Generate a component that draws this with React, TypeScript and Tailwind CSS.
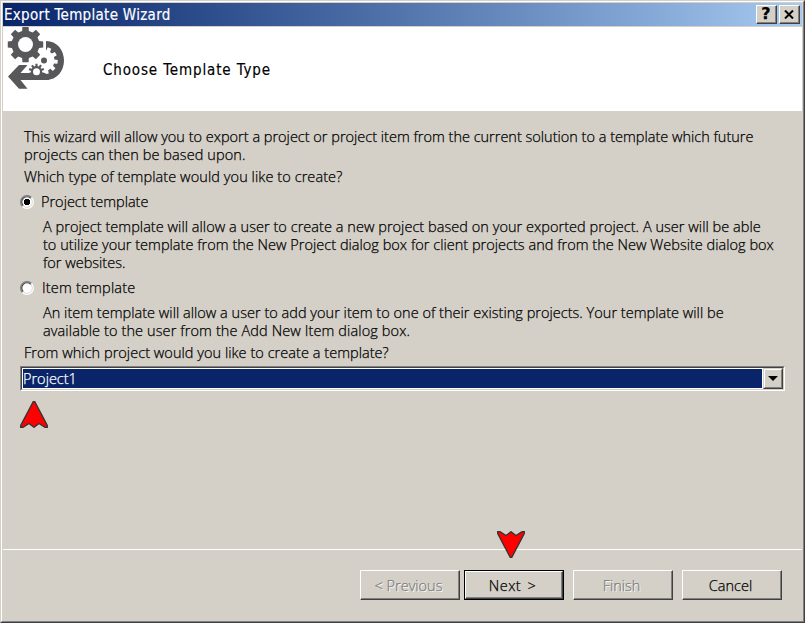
import { type ReactNode } from "react";

const body =
  "font-['Open_Sans','Noto_Sans',sans-serif] font-light text-[14.5px] leading-[18px] whitespace-nowrap text-black [-webkit-text-stroke:0.25px_currentColor]";

function gear(cx: number, cy: number, inner: number, outer: number, teeth: number, turn = 0) {
  const points: string[] = [];
  const step = (Math.PI * 2) / teeth;
  for (let i = 0; i < teeth; i++) {
    const a = i * step + turn;
    const corners: [number, number][] = [
      [-0.31, inner],
      [-0.22, outer],
      [0.22, outer],
      [0.31, inner],
    ];
    for (const [k, r] of corners) {
      points.push(`${(cx + r * Math.cos(a + k * step)).toFixed(2)},${(cy + r * Math.sin(a + k * step)).toFixed(2)}`);
    }
  }
  return points.join(" ");
}

function TemplateIcon() {
  return (
    <svg width="60" height="64" viewBox="6 27 60 64" className="block">
      <path d="M46 41 C57 41 64 50 64 60.500 C64 71 57 80 46 80 H22 V73 H46 Z" fill="#58585a" />
      <path d="M28 50 H46 V70 H28 Z" fill="#fff" />
      <polygon points={gear(44, 60.5, 10.5, 13.8, 10, 0.1)} fill="#fff" />
      <path d="M27.500 65 H19 L8 76.500 L19 88.700 H27.500 L20.500 80 V73 Z" fill="#58585a" />
      <circle cx="44" cy="60.500" r="3" fill="#58585a" />
      <path d="M20 73 H30 L32 75 H42 L45 73 L49 76 V80 H20 Z" fill="#58585a" />
      <polygon points={gear(36.5, 71.5, 5.6, 7.8, 10, 0.31)} fill="#58585a" />
      <circle cx="36.500" cy="71.700" r="3.500" fill="#fff" />
      <polygon points={gear(25.5, 44.5, 14, 18, 8)} fill="#58585a" />
      <circle cx="25.500" cy="44.500" r="7.500" fill="#fff" />
    </svg>
  );
}

function CaptionButton({ children }: { children: ReactNode }) {
  return (
    <div className="h-[19px] w-[21px] border border-t-white border-l-white border-r-[#404040] border-b-[#404040] bg-[#d4d0c8]">
      <div className="flex h-full w-full items-center justify-center border-r border-b border-[#808080]">{children}</div>
    </div>
  );
}

function Radio({ checked = false }: { checked?: boolean }) {
  return (
    <svg width="14" height="14" viewBox="0 0 14 14" className="block shrink-0">
      <circle cx="7" cy="7" r="6" fill="#fff" />
      <path d="M2.500 11.500 A6.300 6.300 0 0 1 11.500 2.500" fill="none" stroke="#808080" strokeWidth="1.300" />
      <path d="M3.300 10.700 A5.200 5.200 0 0 1 10.700 3.300" fill="none" stroke="#404040" strokeWidth="1.100" />
      <path d="M11.500 2.500 A6.300 6.300 0 0 1 2.500 11.500" fill="none" stroke="#fff" strokeWidth="1.200" />
      <path d="M10.800 3.400 A5.200 5.200 0 0 1 3.400 10.800" fill="none" stroke="#d4d0c8" strokeWidth="0.800" />
      {checked && <path d="M5 4 H9 V5 H10 V9 H9 V10 H5 V9 H4 V5 H5 Z" fill="#000" />}
    </svg>
  );
}

function Pointer({ down = false }: { down?: boolean }) {
  return (
    <svg width="28" height="27" viewBox="0 0 28 27" className={down ? "block rotate-180" : "block"}>
      <path d="M13.200 0.700 H14.800 L27.300 24.500 V26.300 H25 L19 22.500 L14 26.300 L9 22.500 L3 26.300 H0.700 V24.500 Z" fill="#f00" stroke="#333" strokeWidth="1.300" />
    </svg>
  );
}

function Button({ children, disabled = false, primary = false }: { children: ReactNode; disabled?: boolean; primary?: boolean }) {
  return (
    <div className={primary ? "h-[30px] w-[100px] border border-black" : "h-[30px] w-[100px]"}>
      <div className="h-full w-full border border-t-white border-l-white border-r-[#404040] border-b-[#404040]">
        <div
          className={
            disabled
              ? "flex h-full w-full items-center justify-center border-r border-b border-[#808080] pt-[3px] pr-[2px] text-[#808080] [text-shadow:1px_1px_0_#fff]"
              : "flex h-full w-full items-center justify-center border-r border-b border-[#808080] pt-[3px] pr-[2px]"
          }
        >
          {children}
        </div>
      </div>
    </div>
  );
}

export default function App() {
  return (
    <div className={`${body} h-[623px] w-[805px] overflow-hidden border border-t-[#d4d0c8] border-l-[#d4d0c8] border-r-[#404040] border-b-[#404040] bg-[#d4d0c8]`}>
      <div className="flex h-full w-full flex-col border border-t-white border-l-white border-r-[#808080] border-b-[#808080] pt-px pr-px pl-px">
        <header className="flex h-[23px] shrink-0 items-center justify-between bg-linear-to-r from-[#0a246a] to-[#a6caf0] pr-[2px] pl-px">
          <h1 className="font-['DejaVu_Sans_Condensed','DejaVu_Sans',sans-serif] text-[15px] font-normal tracking-[0.3px] text-white [-webkit-text-stroke:0.15px_currentColor]">Export Template Wizard</h1>
          <div className="flex gap-[2px]">
            <CaptionButton>
              <span className="font-['DejaVu_Sans',sans-serif] text-[16px] font-bold">?</span>
            </CaptionButton>
            <CaptionButton>
              <svg width="10" height="9" viewBox="0 0 10 9">
                <path d="M1 0.500 L9 8.500 M9 0.500 L1 8.500" stroke="#000" strokeWidth="2" />
              </svg>
            </CaptionButton>
          </div>
        </header>
        <section className="mt-px flex h-[84px] shrink-0 bg-white pl-[3px]">
          <TemplateIcon />
          <h2 className="mt-[34px] ml-[37px] font-['DejaVu_Sans_Condensed','DejaVu_Sans',sans-serif] text-[15px] font-normal tracking-[0.87px] [-webkit-text-stroke:0.15px_currentColor]">Choose Template Type</h2>
        </section>
        <main className="flex h-[438px] shrink-0 flex-col pl-[17px]">
          <div className="mt-[17px] pl-[4px]">
            <p>This wizard will allow you to export a project or project item from the current solution to a template which future</p>
            <p className="tracking-[0.1px]">projects can then be based upon.</p>
            <p className="mt-[4px] tracking-[0.08px]">Which type of template would you like to create?</p>
          </div>
          <div className="mt-[7px] flex h-[18px] items-center gap-[7px]">
            <Radio checked />
            <span>Project template</span>
          </div>
          <div className="mt-[7px] pl-[23px]">
            <p className="tracking-[0.04px]">A project template will allow a user to create a new project based on your exported project. A user will be able</p>
            <p className="tracking-[0.02px]">to utilize your template from the New Project dialog box for client projects and from the New Website dialog box</p>
            <p>for websites.</p>
          </div>
          <div className="mt-[7px] flex h-[18px] items-center gap-[8px]">
            <Radio />
            <span className="tracking-[0.18px]">Item template</span>
          </div>
          <div className="mt-[7px] pl-[23px]">
            <p className="tracking-[0.02px]">An item template will allow a user to add your item to one of their existing projects. Your template will be</p>
            <p className="tracking-[0.11px]">available to the user from the Add New Item dialog box.</p>
          </div>
          <p className="mt-[4px] pl-[4px] tracking-[0.04px]">From which project would you like to create a template?</p>
          <div className="mt-[4px] h-[25px] w-[765px] border border-t-[#808080] border-l-[#808080] border-r-white border-b-white">
            <div className="flex h-full w-full border border-t-[#404040] border-l-[#404040] border-r-[#d4d0c8] border-b-[#d4d0c8] bg-white">
              <div className="my-px ml-px flex flex-1 items-center bg-[#0a246a] pt-px text-white">Project1</div>
              <div className="ml-px h-full w-[20px] border border-t-[#d4d0c8] border-l-[#d4d0c8] border-r-[#404040] border-b-[#404040] bg-[#d4d0c8]">
                <div className="flex h-full w-full items-center justify-center border border-t-white border-l-white border-r-[#808080] border-b-[#808080]">
                  <svg width="10" height="5" viewBox="0 0 10 5">
                    <path d="M0 0 H10 L5 5 Z" fill="#000" />
                  </svg>
                </div>
              </div>
            </div>
          </div>
          <div className="mt-[10px]">
            <Pointer />
          </div>
          <div className="mt-auto h-[18px] pl-[477px]">
            <Pointer down />
          </div>
        </main>
        <footer className="flex h-[72px] shrink-0 border-t border-white pt-[20px] pl-[357px]">
          <Button disabled>&lt; Previous</Button>
          <div className="ml-[4px] [word-spacing:2px] tracking-[0.5px]">
            <Button primary>Next &gt;</Button>
          </div>
          <div className="ml-[9px]">
            <Button disabled>Finish</Button>
          </div>
          <div className="ml-[9px]">
            <Button>Cancel</Button>
          </div>
        </footer>
      </div>
    </div>
  );
}
